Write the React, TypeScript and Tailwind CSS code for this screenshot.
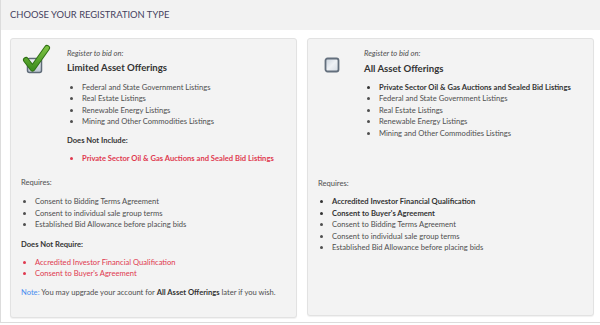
import React from "react";

const font = { fontFamily: "Lato, 'Open Sans', sans-serif" };

function CheckedIcon() {
  return (
    <svg width="30" height="30" viewBox="0 0 30 30">
      <defs>
        <linearGradient id="bx" x1="0" y1="0" x2="0" y2="1">
          <stop offset="0" stopColor="#f4f6f9" />
          <stop offset="1" stopColor="#b9c3cf" />
        </linearGradient>
        <linearGradient id="ck" x1="0" y1="0" x2="0" y2="1">
          <stop offset="0" stopColor="#7cc242" />
          <stop offset="1" stopColor="#3f8f1f" />
        </linearGradient>
      </defs>
      <rect x="5.5" y="14.5" width="14" height="14" rx="2" fill="url(#bx)" stroke="#5f6b78" strokeWidth="1.5" />
      <path d="M4 16 L10.5 24.5 L25 4" fill="none" stroke="#2f6f14" strokeWidth="6" strokeLinecap="round" strokeLinejoin="round" />
      <path d="M4 16 L10.5 24.5 L25 4" fill="none" stroke="url(#ck)" strokeWidth="4" strokeLinecap="round" strokeLinejoin="round" />
    </svg>
  );
}

function EmptyIcon() {
  return (
    <svg width="16" height="16" viewBox="0 0 16 16">
      <defs>
        <linearGradient id="bx2" x1="0" y1="0" x2="1" y2="1">
          <stop offset="0" stopColor="#c9d2dc" />
          <stop offset="0.5" stopColor="#eef1f5" />
          <stop offset="1" stopColor="#d5dce4" />
        </linearGradient>
      </defs>
      <rect x="1.5" y="1.5" width="13" height="13" rx="2" fill="url(#bx2)" stroke="#636f7d" strokeWidth="1.8" />
    </svg>
  );
}

function Bullets({ items, className = "" }: { items: { t: string; c?: string }[]; className?: string }) {
  return (
    <ul className={"list-disc text-[7.6px] leading-[11.5px] " + className}>
      {items.map((it) => (
        <li key={it.t} className={it.c || "text-[#4f4f4f]"}>
          {it.t}
        </li>
      ))}
    </ul>
  );
}

export default function App() {
  return (
    <div className="w-[600px] h-[325px] bg-white overflow-hidden" style={font}>
      <div className="h-[323px] border-l border-b border-[#dcdcdc] flex flex-col">
        <div className="h-[30px] bg-[#f2f2f2] flex items-center pl-[9px]">
          <h1 className="text-[9.4px] text-[#45415e]">CHOOSE YOUR REGISTRATION TYPE</h1>
        </div>
        <div className="flex gap-[10px] pl-[9px] pr-[6px] pt-[8px]">
          {/* Limited */}
          <div className="w-[287px] h-[280px] bg-[#f3f3f3] border border-[#e2e2e2] rounded-[3px] shadow-[0_1px_1px_rgba(0,0,0,0.06)]">
            <div className="flex">
              <div className="w-[56px] pl-[11px] pt-[5px]">
                <CheckedIcon />
              </div>
              <div className="pt-[9px]">
                <p className="italic text-[7.6px] text-[#4f4f4f] leading-[11px]">Register to bid on:</p>
                <p className="font-bold text-[9.6px] text-[#333] leading-[13px] mt-[1.5px]">Limited Asset Offerings</p>
                <Bullets
                  className="mt-[8px] pl-[15px]"
                  items={[
                    { t: "Federal and State Government Listings" },
                    { t: "Real Estate Listings" },
                    { t: "Renewable Energy Listings" },
                    { t: "Mining and Other Commodities Listings" },
                  ]}
                />
                <p className="text-[7.6px] font-bold text-[#333] mt-[7px] leading-[11px]">Does Not Include:</p>
                <Bullets
                  className="mt-[7px] pl-[15px] font-bold"
                  items={[{ t: "Private Sector Oil & Gas Auctions and Sealed Bid Listings", c: "text-[#e0394f]" }]}
                />
              </div>
            </div>
            <div className="pl-[10px]">
              <p className="text-[7.6px] text-[#4f4f4f] mt-[13px] leading-[11px]">Requires:</p>
              <Bullets
                className="mt-[8px] pl-[14px]"
                items={[
                  { t: "Consent to Bidding Terms Agreement" },
                  { t: "Consent to individual sale group terms" },
                  { t: "Established Bid Allowance before placing bids" },
                ]}
              />
              <p className="text-[7.6px] font-bold text-[#333] mt-[8px] leading-[11px]">Does Not Require:</p>
              <Bullets
                className="mt-[7px] pl-[14px]"
                items={[
                  { t: "Accredited Investor Financial Qualification", c: "text-[#e0394f]" },
                  { t: "Consent to Buyer's Agreement", c: "text-[#e0394f]" },
                ]}
              />
              <p className="text-[7.6px] text-[#4f4f4f] mt-[7px] leading-[11px]">
                <span className="text-[#4a8ef0]">Note:</span> You may upgrade your account for{" "}
                <span className="font-bold text-[#333]">All Asset Offerings</span> later if you wish.
              </p>
            </div>
          </div>

          {/* All */}
          <div className="w-[287px] h-[278px] bg-[#f3f3f3] border border-[#e2e2e2] rounded-[3px] shadow-[0_1px_1px_rgba(0,0,0,0.06)]">
            <div className="flex">
              <div className="w-[56px] pl-[16px] pt-[18px]">
                <EmptyIcon />
              </div>
              <div className="pt-[9px]">
                <p className="italic text-[7.6px] text-[#4f4f4f] leading-[11px]">Register to bid on:</p>
                <p className="font-bold text-[9.6px] text-[#333] leading-[13px] mt-[2.5px]">All Asset Offerings</p>
                <Bullets
                  className="mt-[7px] pl-[15px]"
                  items={[
                    { t: "Private Sector Oil & Gas Auctions and Sealed Bid Listings", c: "text-[#333] font-bold" },
                    { t: "Federal and State Government Listings" },
                    { t: "Real Estate Listings" },
                    { t: "Renewable Energy Listings" },
                    { t: "Mining and Other Commodities Listings" },
                  ]}
                />
              </div>
            </div>
            <div className="pl-[10px]">
              <p className="text-[7.6px] text-[#4f4f4f] mt-[39px] leading-[11px]">Requires:</p>
              <Bullets
                className="mt-[7px] pl-[14px]"
                items={[
                  { t: "Accredited Investor Financial Qualification", c: "text-[#333] font-bold" },
                  { t: "Consent to Buyer's Agreement", c: "text-[#333] font-bold" },
                  { t: "Consent to Bidding Terms Agreement" },
                  { t: "Consent to individual sale group terms" },
                  { t: "Established Bid Allowance before placing bids" },
                ]}
              />
            </div>
          </div>
        </div>
      </div>
    </div>
  );
}
